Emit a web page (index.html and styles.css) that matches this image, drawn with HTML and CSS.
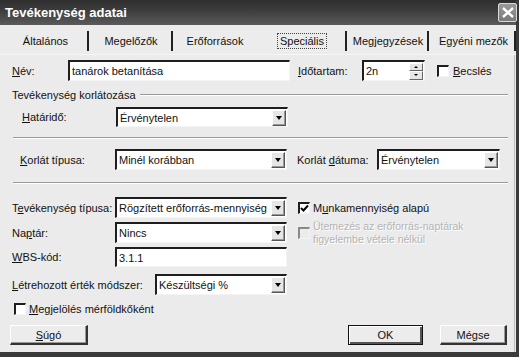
FILE: index.html
```html
<!DOCTYPE html>
<html lang="hu">
<head>
<meta charset="utf-8">
<title>Tevékenység adatai</title>
<link rel="stylesheet" href="styles.css">
</head>
<body>
<div class="window">
  <div class="titlebar">
    <span class="title">Tevékenység adatai</span>
    <span class="close"><svg width="12" height="11" viewBox="0 0 12 11"><path d="M1 1 L11 10 M11 1 L1 10" stroke="#fff" stroke-width="2.4" fill="none"/></svg></span>
  </div>
  <div class="tabs">
    <div class="tab t1">Általános</div>
    <div class="tab t2">Megelőzők</div>
    <div class="tab t3 nosep">Erőforrások</div>
    <div class="tab t4 active"><span class="focus">Speciális</span></div>
    <div class="tab t5">Megjegyzések</div>
    <div class="tab t6">Egyéni mezők</div>
  </div>
  <div class="panel">
    <div class="row r-nev">
      <label class="lbl w-nev"><u>N</u>év:</label>
      <div class="field w-name"><span class="val">tanárok betanítása</span></div>
      <label class="lbl w-ido"><u>I</u>dőtartam:</label>
      <div class="field spin"><span class="val">2n</span>
        <div class="spinbtns"><div class="sb"><i class="up"></i></div><div class="sb"><i class="down"></i></div></div>
      </div>
      <div class="check c-becs"><span class="box"></span><span><u>B</u>ecslés</span></div>
    </div>

    <div class="group"><span>Tevékenység korlátozása</span><span class="etch"></span></div>

    <div class="row r-hat">
      <label class="lbl w-hat"><u>H</u>atáridő:</label>
      <div class="field combo w-172"><span class="val">Érvénytelen</span><span class="arrow"><i></i></span></div>
    </div>

    <div class="sep s1"></div>

    <div class="row r-korl">
      <label class="lbl w-kt"><u>K</u>orlát típusa:</label>
      <div class="field combo w-172"><span class="val">Minél korábban</span><span class="arrow"><i></i></span></div>
      <label class="lbl w-kd">Korlát <u>d</u>átuma:</label>
      <div class="field combo w-123"><span class="val">Érvénytelen</span><span class="arrow"><i></i></span></div>
    </div>

    <div class="sep s2"></div>

    <div class="row r-tip">
      <label class="lbl w-103">T<u>e</u>vékenység típusa:</label>
      <div class="field combo w-172"><span class="val">Rögzített erőforrás-mennyiség</span><span class="arrow"><i></i></span></div>
      <div class="check c-munka"><span class="box checked"><svg width="9" height="9" viewBox="0 0 9 9"><path d="M1 4 L3.5 6.5 L8 1.5" stroke="#000" stroke-width="2" fill="none"/></svg></span><span>M<u>u</u>nkamennyiség alapú</span></div>
    </div>

    <div class="row r-nap">
      <label class="lbl w-103">Na<u>p</u>tár:</label>
      <div class="field combo w-172"><span class="val">Nincs</span><span class="arrow"><i></i></span></div>
      <div class="check c-dis"><span class="box dis"></span><span class="distext">Ütemezés az erőforrás-naptárak<br>figyelembe vétele nélkül</span></div>
    </div>

    <div class="row r-wbs">
      <label class="lbl w-103"><u>W</u>BS-kód:</label>
      <div class="field w-172"><span class="val">3.1.1</span></div>
    </div>

    <div class="row r-let">
      <label class="lbl w-143"><u>L</u>étrehozott érték módszer:</label>
      <div class="field combo w-132"><span class="val">Készültségi %</span><span class="arrow"><i></i></span></div>
    </div>

    <div class="check c-merf"><span class="box"></span><span><u>M</u>egjelölés mérföldkőként</span></div>

    <div class="buttons">
      <button class="btn b-sugo"><u>S</u>úgó</button>
      <span class="spacer"></span>
      <button class="btn default b-ok">OK</button>
      <button class="btn b-megse">Mégse</button>
    </div>
  </div>
</div>
</body>
</html>
```

FILE: styles.css
```css
* { box-sizing: border-box; }
html, body { margin: 0; padding: 0; }
body {
  width: 519px;
  height: 357px;
  overflow: hidden;
  background: #e9e9e9;
  font-family: "Liberation Sans", Arial, sans-serif;
  font-size: 11px;
  color: #111;
}
u { text-decoration: underline; text-underline-offset: 1px; }
.window {
  width: 519px;
  height: 357px;
  background: #ebebeb;
  border-right: 3px solid #3a3a3a;
  border-bottom: 5px solid #3a3a3a;
  display: flex;
  flex-direction: column;
}
.titlebar {
  height: 25px;
  background: linear-gradient(to bottom, #2e2e2e 0%, #3e3e3e 45%, #5a5a5a 100%);
  display: flex;
  align-items: center;
  padding: 0 0 0 5px;
}
.title {
  color: #fff;
  font-weight: bold;
  font-size: 13px;
  flex: 1;
  padding-bottom: 1px;
}
.close {
  width: 19px;
  height: 19px;
  margin-right: -1px;
  border: 1px solid #d8d8d8;
  background: linear-gradient(#9a9a9a, #7a7a7a);
  display: flex;
  align-items: center;
  justify-content: center;
  border-radius: 2px;
}
.tabs {
  height: 30px;
  display: flex;
  align-items: flex-end;
  background: #ececec;
  border-bottom: 1px solid #f6f6f6;
}
.tab {
  height: 20px;
  display: flex;
  align-items: center;
  justify-content: center;
  border-right: 2px solid #222;
  margin-bottom: 3px;
  position: relative;
}
.tab.nosep { border-right: 0; }
.t1 { width: 89px; padding-left: 4px; }
.t2 { width: 84px; padding-left: 2px; }
.t3 { width: 86px; padding-right: 2px; }
.t4 { width: 88px; border-right-color: #222; padding-right: 0; }
.t5 { width: 82px; padding-left: 2px; }
.t6 { width: 87px; padding-left: 4px; }
.focus { outline: 1px dotted #444; outline-offset: 1px; padding: 0 1px; }
.panel {
  flex: 1;
  position: relative;
  padding: 4px 10px 0 12px;
  display: flex;
  flex-direction: column;
  border-right: 1px solid #bdbdbd;
  margin-right: 1px;
}
.row { display: flex; align-items: center; height: 21px; }
.lbl { display: block; white-space: nowrap; }
.field {
  height: 21px;
  background: #fff;
  border-top: 2px solid #1e1e1e;
  border-left: 2px solid #1e1e1e;
  border-right: 1px solid #f4f4f4;
  border-bottom: 1px solid #f4f4f4;
  position: relative;
  display: flex;
  align-items: center;
  overflow: hidden;
}
.val { padding-left: 2px; white-space: nowrap; overflow: hidden; flex: 1; }
.combo .arrow {
  width: 14px;
  height: 16px;
  margin-right: 1px;
  background: #e6e6e6;
  border-top: 1px solid #fff;
  border-left: 1px solid #fff;
  border-right: 1px solid #555;
  border-bottom: 1px solid #555;
  box-shadow: inset -1px -1px 0 #999;
  display: flex;
  align-items: center;
  justify-content: center;
  flex: none;
}
.combo .arrow i {
  width: 0; height: 0;
  border-left: 3.5px solid transparent;
  border-right: 3.5px solid transparent;
  border-top: 4px solid #000;
}

.w-nev { width: 56px; }
.w-name { width: 222px; }
.w-ido { width: 64px; margin-left: 8px; }
.spin { width: 63px; }
.spinbtns { width: 14px; height: 17px; display: flex; flex-direction: column; margin-right: 1px; }
.sb {
  flex: 1;
  background: #e6e6e6;
  border-top: 1px solid #fff;
  border-left: 1px solid #fff;
  border-right: 1px solid #666;
  border-bottom: 1px solid #666;
  display: flex; align-items: center; justify-content: center;
}
.sb i { width: 0; height: 0; border-left: 2px solid transparent; border-right: 2px solid transparent; }
.sb .up { border-bottom: 2px solid #000; }
.sb .down { border-top: 2px solid #000; }

.check { display: flex; align-items: center; gap: 4px; white-space: nowrap; }
.box {
  width: 12px; height: 12px;
  background: #fff;
  border-top: 2px solid #1e1e1e;
  border-left: 2px solid #1e1e1e;
  border-right: 1px solid #f4f4f4;
  border-bottom: 1px solid #f4f4f4;
  display: flex; align-items: center; justify-content: center;
  flex: none;
}
.box.dis { border-top-color: #8a8a8a; border-left-color: #8a8a8a; background: #ececec; }
.c-becs { margin-left: 12px; }

.r-nev { margin-top: 1px; }
.group {
  display: flex; align-items: center;
  margin-top: 7px;
  height: 14px;
}
.group .etch {
  flex: 1;
  margin-left: 4px;
  margin-right: -4px;
  border-top: 1px solid #9a9a9a;
  border-bottom: 1px solid #fff;
}
.r-hat { margin-top: 5px; padding-left: 10px; height: 20px; }
.r-hat .field { height: 20px; }
.w-hat { width: 94px; }
.w-172 { width: 172px; }
.w-123 { width: 123px; }
.w-132 { width: 132px; }
.w-103 { width: 103px; }
.w-143 { width: 143px; }
.sep {
  height: 2px;
  border-top: 1px solid #9a9a9a;
  border-bottom: 1px solid #fff;
  margin-right: -4px;
  margin-left: 1px;
}
.s1 { margin-top: 10px; }
.r-korl { margin-top: 10px; }
.w-kt { width: 95px; margin-left: 8px; }
.w-kd { width: 80px; margin-left: 10px; }
.s2 { margin-top: 12px; }
.r-tip { margin-top: 13px; }
.c-munka { margin-left: 11px; gap: 3px; }
.r-nap { margin-top: 4px; }
.c-dis { margin-left: 11px; gap: 3px; }
.distext {
  color: #b4b4b4;
  text-shadow: 1px 1px 0 #fff;
  line-height: 13px;
  font-size: 10.5px;
}
.r-wbs { margin-top: 4px; height: 20px; }
.r-wbs .field { height: 20px; }
.r-let { margin-top: 7px; }
.c-merf { margin-top: 8px; margin-left: 2px; gap: 3px; }
.buttons { display: flex; margin-top: 10px; margin-left: -2px; margin-right: -3px; }
.spacer { flex: 1; }
.btn {
  font: inherit;
  color: #111;
  height: 20px;
  background: #ececec;
  border-top: 1px solid #fff;
  border-left: 1px solid #fff;
  border-right: 2px solid #333;
  border-bottom: 2px solid #333;
  box-shadow: inset -1px -1px 0 #999;
  padding: 0;
}
.b-sugo { width: 78px; }
.b-ok { width: 75px; border: 1px solid #111; box-shadow: inset 1px 1px 0 #fff, inset -2px -2px 0 #555; }
.b-megse { width: 67px; margin-left: 17px; }
```
